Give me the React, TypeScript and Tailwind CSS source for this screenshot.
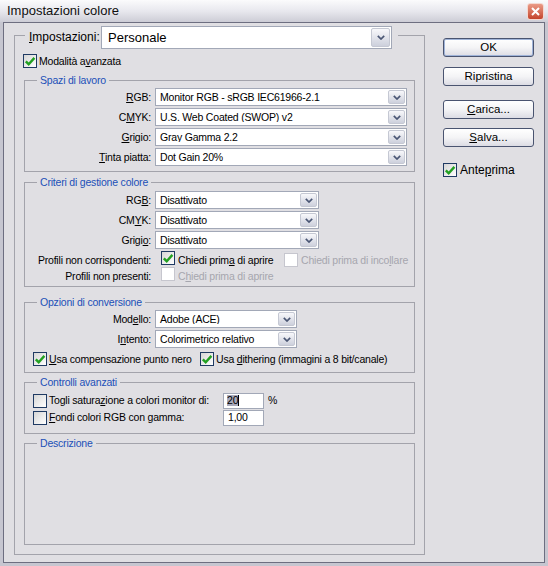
import React from "react";

function Check({ checked = false, disabled = false }: { checked?: boolean; disabled?: boolean }) {
  return (
    <span
      className={`inline-flex h-[14px] w-[14px] shrink-0 items-center justify-center border ${
        disabled ? "border-[#c6c6ce] bg-white" : "border-[#1f3a63] bg-gradient-to-br from-[#d6d6d6] to-white"
      }`}
    >
      {checked && (
        <svg width="12" height="12" viewBox="0 0 12 12">
          <path d="M1.8 6.3 L4.7 9.2 L10.4 2.9" fill="none" stroke="#22a022" strokeWidth="2.4" />
        </svg>
      )}
    </span>
  );
}

function Select({ value, cls, big = false }: { value: string; cls: string; big?: boolean }) {
  return (
    <div className={`flex shrink-0 items-center border border-[#a2a8b7] bg-white ${cls}`}>
      <span className={`flex-1 truncate leading-none ${big ? "pl-[6px] text-[13px] tracking-normal" : "pl-[4px]"}`}>{value}</span>
      <span
        className={`mr-[1px] flex items-center justify-center rounded-[2px] border border-[#c5c8d3] bg-gradient-to-b from-[#f8f8fb] to-[#cdd0dc] ${
          big ? "h-[19px] w-[19px]" : "h-[14px] w-[17px]"
        }`}
      >
        <svg width="8" height="5" viewBox="0 0 8 5">
          <path d="M0.8 0.8 L4 4 L7.2 0.8" fill="none" stroke="#4b5775" strokeWidth="1.7" />
        </svg>
      </span>
    </div>
  );
}

function Group({ title, cls, children }: { title: string; cls: string; children?: React.ReactNode }) {
  return (
    <fieldset className={`ml-[9px] w-[391px] border border-[#a3a3ab] ${cls}`}>
      <legend className="ml-[12px] px-[3px] leading-[13px] text-[#2150b8]">{title}</legend>
      {children}
    </fieldset>
  );
}

function Row({ label, children }: { label: React.ReactNode; children: React.ReactNode }) {
  return (
    <div className="flex h-[18px] items-center">
      <span className="w-[127px] shrink-0 pr-[1px] text-right leading-none">{label}</span>
      <span className="w-[3px] shrink-0" />
      {children}
    </div>
  );
}

function Btn({ children, def = false, cls }: { children: React.ReactNode; def?: boolean; cls: string }) {
  return (
    <div
      className={`flex h-[19px] w-[91px] items-center justify-center rounded-[3px] border border-[#4a5470] bg-gradient-to-b from-white via-[#f4f4f6] to-[#dcdce4] text-[11.5px] leading-none tracking-normal ${
        def ? "shadow-[inset_0_0_0_1px_#9fb3d8]" : ""
      } ${cls}`}
    >
      {children}
    </div>
  );
}

export default function App() {
  return (
    <div className="flex h-[566px] w-[548px] flex-col bg-[#c6c6d0] font-['Liberation_Sans',Arial,sans-serif] text-[10.5px] tracking-[-0.2px] text-black">
      <div className="flex h-[22px] shrink-0 items-center justify-between bg-gradient-to-b from-[#fbfbfc] via-[#e8e8ee] to-[#cdcdd6] pl-[7px] pr-[4px]">
        <span className="text-[13px] tracking-normal text-[#101010]">Impostazioni colore</span>
        <div className="flex h-[17px] w-[17px] items-center justify-center rounded-[3px] border border-[#f4d8d0] bg-gradient-to-b from-[#ea9a86] to-[#c3432b]">
          <svg width="9" height="9" viewBox="0 0 9 9">
            <path d="M1 1 L8 8 M8 1 L1 8" stroke="white" strokeWidth="2" />
          </svg>
        </div>
      </div>
      <div className="flex-1 px-[3px] pb-[3px]">
        <div className="flex h-full border border-[#6d6e80] bg-[#e0dfe3] pl-[10px] pt-[3px]">
          {/* left column */}
          <fieldset className="h-[529px] w-[411px] shrink-0 border border-[#a3a3ab]">
            <legend className="ml-[10px] h-[19px] pl-[4px] pr-[6px]">
              <div className="flex h-[19px] items-start">
                <span className="w-[72px] shrink-0 text-[12px] leading-[23px] tracking-normal">
                  <u>I</u>mpostazioni:
                </span>
                <Select value="Personale" cls="h-[23px] w-[291px]" big />
              </div>
            </legend>
            <div className="ml-[8px] mt-[9px] flex h-[14px] items-center gap-[2px]">
              <Check checked />
              <span className="leading-none">
                Modalità a<u>v</u>anzata
              </span>
            </div>

            <Group title="Spazi di lavoro" cls="mt-[6px] pb-[5px]">
              <div className="mt-[1px] flex flex-col gap-[2px]">
                <Row label={<><u>R</u>GB:</>}>
                  <Select value="Monitor RGB - sRGB IEC61966-2.1" cls="h-[18px] w-[252px]" />
                </Row>
                <Row label={<>C<u>M</u>YK:</>}>
                  <Select value="U.S. Web Coated (SWOP) v2" cls="h-[18px] w-[252px]" />
                </Row>
                <Row label={<><u>G</u>rigio:</>}>
                  <Select value="Gray Gamma 2.2" cls="h-[18px] w-[252px]" />
                </Row>
                <Row label={<><u>T</u>inta piatta:</>}>
                  <Select value="Dot Gain 20%" cls="h-[18px] w-[252px]" />
                </Row>
              </div>
            </Group>

            <Group title="Criteri di gestione colore" cls="mt-[4px] pb-[2px]">
              <div className="mt-[2px] flex flex-col gap-[2px]">
                <Row label={<>RG<u>B</u>:</>}>
                  <Select value="Disattivato" cls="h-[18px] w-[164px]" />
                </Row>
                <Row label={<>CM<u>Y</u>K:</>}>
                  <Select value="Disattivato" cls="h-[18px] w-[164px]" />
                </Row>
                <Row label={<>Grigi<u>o</u>:</>}>
                  <Select value="Disattivato" cls="h-[18px] w-[164px]" />
                </Row>
              </div>
              <div className="mt-[3px] flex h-[16px] items-center">
                <span className="w-[127px] shrink-0 pr-[1px] text-right leading-none">Profili non corrispondenti:</span>
                <span className="ml-[9px]"><Check checked /></span>
                <span className="ml-[3px] w-[106px] shrink-0 leading-none">
                  Chiedi prim<u>a</u> di aprire
                </span>
                <Check disabled />
                <span className="ml-[3px] leading-none text-[#a6a6ae]">
                  Chiedi prima di inco<u>l</u>lare
                </span>
              </div>
              <div className="flex h-[16px] items-center">
                <span className="w-[127px] shrink-0 pr-[1px] text-right leading-none">Profili non presenti:</span>
                <span className="ml-[9px]"><Check disabled /></span>
                <span className="ml-[3px] leading-none text-[#a6a6ae]">
                  C<u>h</u>iedi prima di aprire
                </span>
              </div>
            </Group>

            <Group title="Opzioni di conversione" cls="mt-[9px] pb-[5px]">
              <div className="mt-[1px] flex flex-col gap-[2px]">
                <Row label={<>Mod<u>e</u>llo:</>}>
                  <Select value="Adobe (ACE)" cls="h-[18px] w-[142px]" />
                </Row>
                <Row label={<>I<u>n</u>tento:</>}>
                  <Select value="Colorimetrico relativo" cls="h-[18px] w-[142px]" />
                </Row>
              </div>
              <div className="ml-[8px] mt-[3px] flex h-[16px] items-center">
                <Check checked />
                <span className="ml-[2px] w-[151px] shrink-0 leading-none">
                  <u>U</u>sa compensazione punto nero
                </span>
                <Check checked />
                <span className="ml-[2px] leading-none">
                  Usa <u>d</u>ithering (immagini a 8 bit/canale)
                </span>
              </div>
            </Group>

            <Group title="Controlli avanzati" cls="mt-[3px] pb-[7px]">
              <div className="ml-[8px] mt-[3px] flex h-[17px] items-center">
                <Check />
                <span className="ml-[2px] w-[174px] shrink-0 leading-none">
                  Togli satura<u>z</u>ione a colori monitor di:
                </span>
                <div className="flex h-[16px] w-[41px] items-center border border-[#a2a8b7] bg-white pl-[3px]">
                  <span className="bg-[#a9aabb] leading-none">20</span>
                  <span className="h-[11px] w-[1px] bg-black" />
                </div>
                <span className="ml-[4px] leading-none">%</span>
              </div>
              <div className="ml-[8px] flex h-[17px] items-center">
                <Check />
                <span className="ml-[2px] w-[174px] shrink-0 leading-none">
                  <u>F</u>ondi colori RGB con gamma:
                </span>
                <div className="flex h-[16px] w-[41px] items-center border border-[#a2a8b7] bg-white pl-[4px]">
                  <span className="leading-none">1,00</span>
                </div>
              </div>
            </Group>

            <Group title="Descrizione" cls="mt-[3px] h-[108px]" />
          </fieldset>

          {/* right column */}
          <div className="ml-[18px] flex w-[91px] flex-col">
            <Btn def cls="mt-[12px]">OK</Btn>
            <Btn cls="mt-[10px]">Ripristina</Btn>
            <Btn cls="mt-[14px]">
              <span><u>C</u>arica...</span>
            </Btn>
            <Btn cls="mt-[9px]">
              <span><u>S</u>alva...</span>
            </Btn>
            <div className="mt-[16px] flex h-[14px] items-center">
              <Check checked />
              <span className="ml-[3px] text-[12px] leading-none tracking-normal">
                Ante<u>p</u>rima
              </span>
            </div>
          </div>
        </div>
      </div>
    </div>
  );
}
